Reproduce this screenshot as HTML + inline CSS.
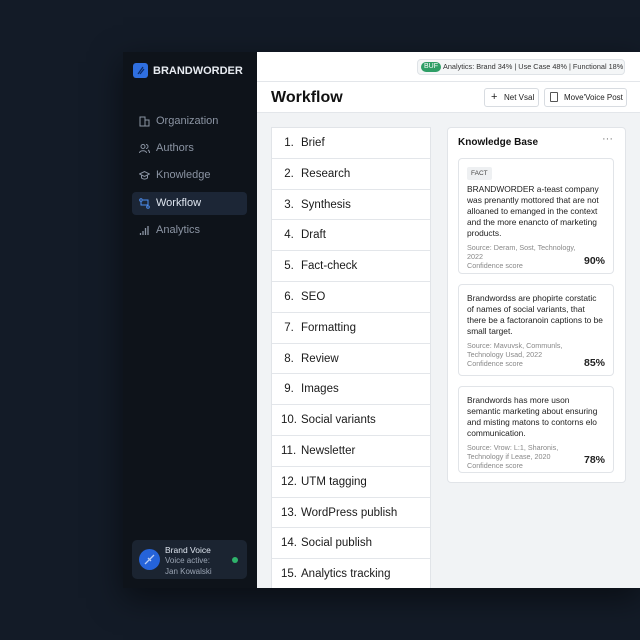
<!DOCTYPE html><html><head><style>
*{box-sizing:border-box;margin:0;padding:0}
body{width:640px;height:640px;overflow:hidden;background:#131b27;font-family:"Liberation Sans",sans-serif;position:relative}
.app{position:absolute;left:123px;top:52px;width:517px;height:536px;background:#f1f3f5;box-shadow:0 10px 30px rgba(0,0,0,.5)}
.side{position:absolute;left:0;top:0;width:134px;height:536px;background:#0e131a}
.logo{position:absolute;left:10px;top:11px;width:15px;height:15px;background:#2f6fe0;border-radius:3px}
.brand{position:absolute;left:30px;top:13px;color:#e8ecf2;font-size:11px;font-weight:bold;letter-spacing:0}
.nav{position:absolute;left:9px;width:115px;height:23px;color:#8b94a3;font-size:11px;line-height:23px;padding-left:24px}
.nav.act{background:#1c2636;color:#dfe6f0;border-radius:4px}
.nav svg{position:absolute;left:7px;top:6px}
.bv{position:absolute;left:9px;top:488px;width:115px;height:39px;background:#1b2431;border-radius:5px}
.bv .c{position:absolute;left:7px;top:9px;width:21px;height:21px;border-radius:50%;background:#2563d9}
.bv .t{position:absolute;left:33px;top:5px;color:#dfe6f0;font-size:8.5px;line-height:10px}
.bv .t span{color:#9aa4b3;font-size:8px}
.bv .d{position:absolute;right:9px;top:17px;width:6px;height:6px;border-radius:50%;background:#2fb36b}
.top{position:absolute;left:134px;top:0;right:0;height:30px;background:#fff;border-bottom:1px solid #e3e6ea}
.pill{position:absolute;left:160px;top:7px;width:208px;height:16px;border:1px solid #dfe3e7;background:#f4f6f7;border-radius:4px;font-size:7.3px;color:#333;line-height:14px;padding-left:25px;white-space:nowrap}
.pill b{position:absolute;left:3px;top:2px;background:#2e9e66;color:#fff;border-radius:5px;font-size:7px;line-height:10px;padding:0 3px;font-weight:normal}
.hdr{position:absolute;left:134px;top:30px;right:0;height:31px;background:#fff;border-bottom:1px solid #e3e6ea}
.hdr h1{position:absolute;left:14px;top:7px;font-size:16px;color:#111;font-weight:bold}
.btn{position:absolute;top:6px;height:19px;border:1px solid #d8dce1;border-radius:3px;background:#fff;font-size:8px;color:#222;line-height:17px;padding-left:19px}
.list{position:absolute;left:148px;top:75px;width:160px;height:461px;background:#fff;border:1px solid #e1e4e8;border-bottom:none}
.row{height:30.8px;border-bottom:1px solid #e3e6ea;font-size:11.5px;color:#1a1a1a;line-height:30px;padding-left:9px;white-space:nowrap}
.row i{font-style:normal;display:inline-block;width:20px}
.kb{position:absolute;left:324px;top:75px;width:179px;height:356px;background:#fff;border:1px solid #e1e4e8;border-radius:4px}
.kb h2{position:absolute;left:10px;top:9px;font-size:10px;color:#111}
.card{position:absolute;left:10px;width:156px;border:1px solid #e1e4e8;border-radius:4px;padding:8px 8px;font-size:8.4px;line-height:11px;color:#222}
.card small{display:block;color:#888;font-size:7.2px;line-height:9px;margin-top:4px}
.card .p{position:absolute;right:8px;bottom:6px;font-size:10.5px;font-weight:bold;color:#222}
.tag{display:inline-block;background:#eef0f2;font-size:6.5px;color:#444;padding:1px 4px;border-radius:2px;margin-bottom:4px}
</style></head><body>
<div class="app">
<div class="side">
<div class="logo"><svg width="15" height="15"><path d="M5 11 L10 4 M7 11 L11 6" stroke="#0b2a66" stroke-width="1.2"/></svg></div>
<div class="brand">BRANDWORDER</div>
<div class="nav" style="top:58px"><svg width="11" height="11" fill="none" stroke="#8b94a3"><rect x="1" y="1" width="5" height="9"/><rect x="6" y="4" width="4" height="6"/></svg>Organization</div>
<div class="nav" style="top:85px"><svg width="11" height="11" fill="none" stroke="#8b94a3"><circle cx="4" cy="3.5" r="2"/><path d="M0.5 10c0-3 7-3 7 0M7 1.5a2 2 0 010 4M9 7c1 .5 1.5 1.5 1.5 3"/></svg>Authors</div>
<div class="nav" style="top:112px"><svg width="11" height="11" fill="none" stroke="#8b94a3"><path d="M0.5 4L5.5 1.5 10.5 4 5.5 6.5z M2.5 5v3c2 1.5 4 1.5 6 0V5"/></svg>Knowledge</div>
<div class="nav act" style="top:140px"><svg width="11" height="11" fill="none" stroke="#4c8df0"><circle cx="2" cy="2" r="1.3"/><circle cx="9" cy="9" r="1.3"/><path d="M2 3.5V7h7M4 2h5v5"/></svg>Workflow</div>
<div class="nav" style="top:167px"><svg width="11" height="11" fill="none" stroke="#8b94a3" stroke-width="1.3"><path d="M1.5 10V8M4 10V6M6.5 10V3M9 10V1"/></svg>Analytics</div>
<div class="bv"><div class="c"><svg width="21" height="21"><path d="M6 15L15 6M9 9l3 3" stroke="#b9cdf5" stroke-width="1.3"/></svg></div><div class="t">Brand Voice<br><span>Voice active:<br>Jan Kowalski</span></div><div class="d"></div></div>
</div>
<div class="top"><div class="pill"><b>BUF</b>Analytics: Brand 34% | Use Case 48% | Functional 18%</div></div>
<div class="hdr"><h1>Workflow</h1>
<div class="btn" style="left:227px;width:55px"><span style="position:absolute;left:6px;font-size:11px">+</span>Net Vsal</div>
<div class="btn" style="left:287px;width:83px"><span style="position:absolute;left:5px;top:3px;width:8px;height:10px;border:1px solid #555;border-radius:1px"></span>Move'Voice Post</div>
</div>
<div class="list">
<div class="row"><i>&nbsp;1.</i>Brief</div><div class="row"><i>&nbsp;2.</i>Research</div><div class="row"><i>&nbsp;3.</i>Synthesis</div><div class="row"><i>&nbsp;4.</i>Draft</div><div class="row"><i>&nbsp;5.</i>Fact-check</div><div class="row"><i>&nbsp;6.</i>SEO</div><div class="row"><i>&nbsp;7.</i>Formatting</div><div class="row"><i>&nbsp;8.</i>Review</div><div class="row"><i>&nbsp;9.</i>Images</div><div class="row"><i>10.</i>Social variants</div><div class="row"><i>11.</i>Newsletter</div><div class="row"><i>12.</i>UTM tagging</div><div class="row"><i>13.</i>WordPress publish</div><div class="row"><i>14.</i>Social publish</div><div class="row" style="border:none"><i>15.</i>Analytics tracking</div>
</div>
<div class="kb"><h2>Knowledge Base</h2><span style="position:absolute;right:12px;top:5px;color:#777;font-size:11px">···</span>
<div class="card" style="top:30px;height:116px"><span class="tag">FACT</span><br>BRANDWORDER a-teast company was prenantly mottored that are not alloaned to emanged in the context and the more enancto of marketing products.<small>Source: Deram, Sost, Technology,<br>2022<br>Confidence score</small><span class="p">90%</span></div>
<div class="card" style="top:156px;height:92px">Brandwordss are phopirte corstatic of names of social variants, that there be a factoranoin captions to be small target.<small>Source: Mavuvsk, Communls,<br>Technology Usad, 2022<br>Confidence score</small><span class="p">85%</span></div>
<div class="card" style="top:258px;height:87px">Brandwords has more uson semantic marketing about ensuring and misting matons to contorns elo communication.<small>Source: Vrow: L:1, Sharonis,<br>Technology if Lease, 2020<br>Confidence score</small><span class="p">78%</span></div>
</div>
</div>
</body></html>
